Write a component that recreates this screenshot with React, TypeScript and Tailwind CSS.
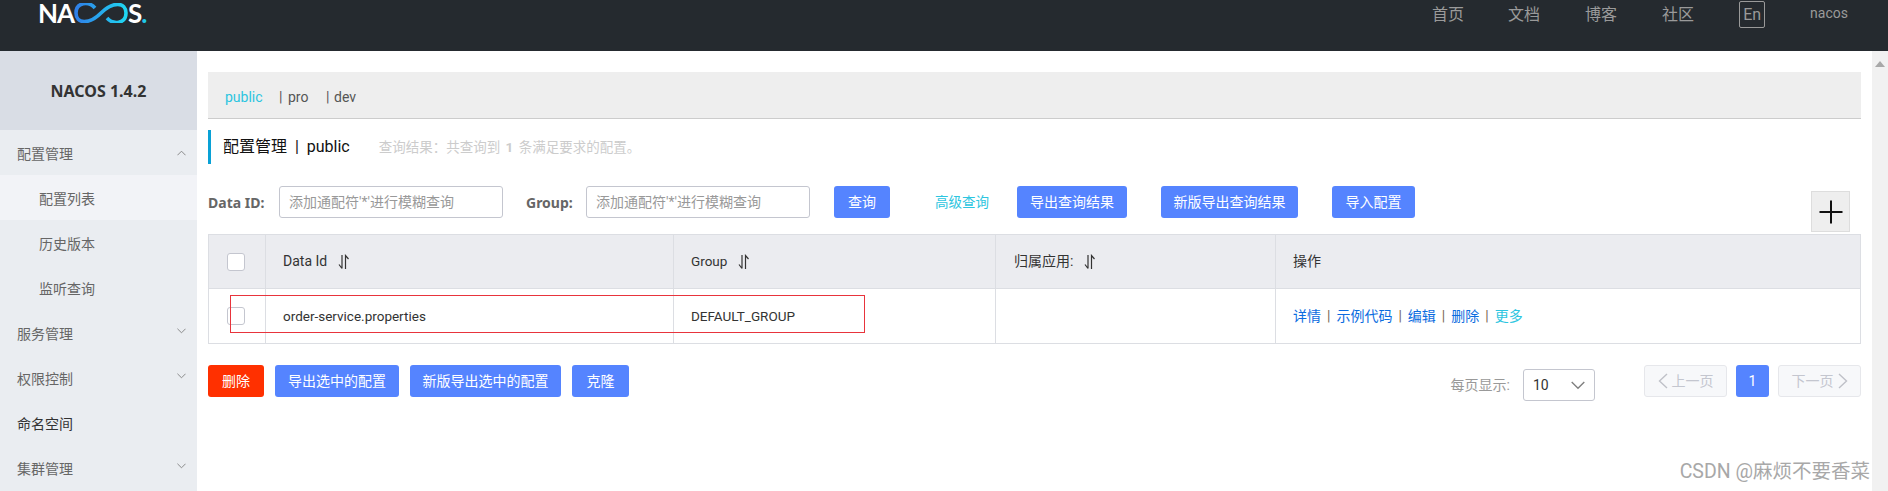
import React from "react";

const Chevron = ({ up, className }: { up?: boolean; className?: string }) => (
  <svg viewBox="0 0 10 6" className={className} fill="none" stroke="#808080" strokeWidth="1">
    <path d={up ? "M0.5 5.5 L5 1 L9.5 5.5" : "M0.5 0.5 L5 5 L9.5 0.5"} />
  </svg>
);
const Sort = () => (
  <svg viewBox="0 0 12 16" className="w-3 h-4 ml-[11px]" fill="none" stroke="#333" strokeWidth="1.2">
    <path d="M4 1 V14.5 M1 10.5 L4 14.5 M7.5 15 V1.5 L10.5 5" />
  </svg>
);
const Btn = ({ w, children, red }: { w: string; children: React.ReactNode; red?: boolean }) => (
  <button className={`${w} h-8 rounded-[3px] text-white text-[14px] flex items-center justify-center ${red ? "bg-[#ff3000]" : "bg-[#5584ff]"}`}>{children}</button>
);
const MenuRow = ({ label, chevron, up, dark }: { label: string; chevron?: boolean; up?: boolean; dark?: boolean }) => (
  <div className={`h-[45px] pl-[17px] pt-[4px] flex items-center relative text-[14px] ${dark ? "text-[#333]" : "text-[#666]"}`}>
    {label}
    {chevron && <Chevron up={up} className={`w-[9px] h-[6px] absolute left-[177px] ${up ? "top-[20px]" : "top-[18px]"}`} />}
  </div>
);
const SubRow = ({ label, active }: { label: string; active?: boolean }) => (
  <div className={`h-[45px] pl-[39px] pt-[4px] flex items-center text-[14px] text-[#666] ${active ? "bg-[#f2f3f7]" : ""}`}>{label}</div>
);
const Input = () => (
  <div className="w-[224px] h-8 border border-[#c4c6cf] rounded-[3px] pl-[9px] flex items-center text-[14px] text-[#999] bg-white">添加通配符'*'进行模糊查询</div>
);
const Sep = () => <span className="text-[#7a6a55] mx-[6px]">|</span>;

export default function App() {
  return (
    <div className="w-[1888px] h-[491px] overflow-hidden bg-white flex flex-col font-['Roboto','Noto_Sans_CJK_SC',sans-serif]">
      <header className="h-[51px] shrink-0 bg-[#252a2f] relative flex items-start">
        <div className="ml-[38px] flex items-center h-[26px] text-white text-[26px] font-bold leading-[26px] font-['Lato',sans-serif]">
          <span className="tracking-[-1px]">NA</span>
          <svg viewBox="0 0 54 20" className="w-[54px] h-[20px]" fill="none" strokeWidth="3.6">
            <defs>
              <linearGradient id="lg" x1="0" x2="1" y1="0" y2="0">
                <stop offset="0" stopColor="#2f7fe8" />
                <stop offset="1" stopColor="#1fd6f2" />
              </linearGradient>
            </defs>
            <path stroke="url(#lg)" d="M21 5 C15 -2 2 -1 2 10 C2 21 15 22 27 10 C39 -2 52 -1 52 10 C52 21 39 22 33 15" />
          </svg>
          <span>S</span>
          <span className="text-[#1fc8e8] -ml-[1px]">.</span>
        </div>
        <nav className="ml-auto flex items-start text-[#9a9a9a] text-[16px] leading-none pt-[7px]">
          <span className="w-[76px]">首页</span>
          <span className="w-[77px]">文档</span>
          <span className="w-[77px]">博客</span>
          <span className="w-[77px]">社区</span>
          <span className="w-[26px] h-[27px] -mt-[6px] border border-[#9a9a9a] rounded-[2px] flex items-center justify-center">En</span>
          <span className="ml-[45px] mr-[40px] -mt-[1px] text-[14px]">nacos</span>
        </nav>
      </header>
      <div className="flex flex-1 min-h-0">
        <aside className="w-[197px] shrink-0 bg-[#eaedf1]">
          <div className="h-[79px] bg-[#d9dde5] flex items-center justify-center text-[16px] font-bold text-[#333] font-['Noto_Sans',sans-serif]">NACOS 1.4.2</div>
          <MenuRow label="配置管理" chevron up />
          <SubRow label="配置列表" active />
          <SubRow label="历史版本" />
          <SubRow label="监听查询" />
          <MenuRow label="服务管理" chevron />
          <MenuRow label="权限控制" chevron />
          <MenuRow label="命名空间" dark />
          <MenuRow label="集群管理" chevron />
        </aside>
        <main className="flex-1 pl-[11px] pr-[11px] pt-[21px] relative">
          <div className="h-[47px] bg-[#eeeeee] border-b border-[#cccccc] pl-[17px] flex items-center text-[14px] pt-[5px]">
            <span className="text-[#2cc5e0] w-[54px]">public</span>
            <span className="text-[#555] w-[9px]">|</span>
            <span className="text-[#555] w-[38px]">pro</span>
            <span className="text-[#555] w-[8px]">|</span>
            <span className="text-[#555]">dev</span>
          </div>
          <div className="mt-[11px] h-[34px] border-l-[3px] border-[#09a1d6] pl-3 flex items-center">
            <span className="text-[16px] text-[#111]">配置管理&nbsp;&nbsp;|&nbsp;&nbsp;public</span>
            <span className="ml-[29px] text-[13.5px] text-[#ccc]">查询结果：共查询到 <b className="mx-[2px]">1</b> 条满足要求的配置。</span>
          </div>
          <div className="mt-[22px] mb-[2px] flex items-start">
            <span className="w-[71px] h-8 flex items-center text-[14px] font-bold text-[#666] font-['Noto_Sans',sans-serif]">Data ID:</span>
            <Input />
            <span className="ml-[23px] w-[60px] h-8 flex items-center text-[14px] font-bold text-[#666] font-['Noto_Sans',sans-serif]">Group:</span>
            <Input />
            <span className="ml-[24px]"><Btn w="w-[56px]">查询</Btn></span>
            <span className="ml-[45px] w-[54px] h-8 flex items-center text-[13.5px] text-[#2cc5e0] whitespace-nowrap">高级查询</span>
            <span className="ml-[28px]"><Btn w="w-[110px]">导出查询结果</Btn></span>
            <span className="ml-[34px]"><Btn w="w-[137px]">新版导出查询结果</Btn></span>
            <span className="ml-[34px]"><Btn w="w-[83px]">导入配置</Btn></span>
            <span className="ml-auto mr-[11px] mt-[5px] w-[39px] h-[41px] bg-[#eeeeee] border border-[#dddddd] flex items-center justify-center">
              <svg viewBox="0 0 24 24" className="w-6 h-6" stroke="#111" strokeWidth="2"><path d="M12 0.5V23.5M0.5 12H23.5" /></svg>
            </span>
          </div>
          <div className="relative">
            <div className="border border-[#dcdee3] grid grid-cols-[57px_408px_322px_280px_1fr] text-[14px] text-[#333]">
              <div className="h-[54px] bg-[#ebecf0] border-r border-b border-[#dcdee3] flex items-center pl-[18px]">
                <span className="w-[18px] h-[18px] bg-white border border-[#c4c6cf] rounded-[3px]" />
              </div>
              <div className="h-[54px] bg-[#ebecf0] border-r border-b border-[#dcdee3] flex items-center pl-[17px]">Data Id<Sort /></div>
              <div className="h-[54px] bg-[#ebecf0] border-r border-b border-[#dcdee3] flex items-center pl-[17px] text-[13.5px]">Group<Sort /></div>
              <div className="h-[54px] bg-[#ebecf0] border-r border-b border-[#dcdee3] flex items-center pl-[18px]">归属应用:<Sort /></div>
              <div className="h-[54px] bg-[#ebecf0] border-b border-[#dcdee3] flex items-center pl-[17px]">操作</div>
              <div className="h-[54px] border-r border-[#dcdee3] flex items-center pl-[18px]">
                <span className="w-[18px] h-[18px] bg-white border border-[#c4c6cf] rounded-[3px]" />
              </div>
              <div className="h-[54px] border-r border-[#dcdee3] flex items-center pl-[17px] text-[13.5px]">order-service.properties</div>
              <div className="h-[54px] border-r border-[#dcdee3] flex items-center pl-[17px] text-[13.5px]">DEFAULT_GROUP</div>
              <div className="h-[54px] border-r border-[#dcdee3]" />
              <div className="h-[54px] flex items-center pl-[17px] text-[#0b6ce0]">
                详情<Sep />示例代码<Sep />编辑<Sep />删除<Sep /><span className="text-[#2cc5e0]">更多</span>
              </div>
            </div>
            <div className="absolute left-[22px] top-[61px] w-[635px] h-[38px] border-[1.5px] border-[#e8343c]" />
          </div>
          <div className="mt-[21px] flex items-start">
            <Btn w="w-[56px]" red>删除</Btn>
            <span className="ml-[11px]"><Btn w="w-[124px]">导出选中的配置</Btn></span>
            <span className="ml-[11px]"><Btn w="w-[151px]">新版导出选中的配置</Btn></span>
            <span className="ml-[11px]"><Btn w="w-[57px]">克隆</Btn></span>
            <span className="ml-auto mt-[12px] text-[14px] leading-[16px] text-[#999]">每页显示:</span>
            <div className="ml-[13px] mt-[4px] w-[72px] h-8 border border-[#c4c6cf] rounded-[3px] pl-[9px] pr-[9px] flex items-center justify-between text-[14px] text-[#333]">
              10<Chevron className="w-[14px] h-[9px]" />
            </div>
            <div className="ml-[49px] w-[83px] h-8 bg-[#f7f8fa] border border-[#e6e7eb] rounded-[3px] flex items-center justify-center text-[14px] text-[#c4c6cf] gap-[4px]">
              <svg viewBox="0 0 10 16" className="w-[10px] h-[16px]" fill="none" stroke="#bfc1c8" strokeWidth="1.4"><path d="M9 1 L1.5 8 L9 15" /></svg>上一页
            </div>
            <div className="ml-[9px] w-[33px] h-8 bg-[#5584ff] rounded-[3px] flex items-center justify-center text-[14px] text-white">1</div>
            <div className="ml-[9px] w-[83px] h-8 bg-[#f7f8fa] border border-[#e6e7eb] rounded-[3px] flex items-center justify-center text-[14px] text-[#c4c6cf] gap-[4px]">
              下一页<svg viewBox="0 0 10 16" className="w-[10px] h-[16px]" fill="none" stroke="#bfc1c8" strokeWidth="1.4"><path d="M1 1 L8.5 8 L1 15" /></svg>
            </div>
          </div>
          <div className="absolute right-[2px] bottom-[7px] text-[19.5px] leading-6 text-[#a8a8a8] whitespace-nowrap">CSDN @麻烦不要香菜</div>
        </main>
        <div className="w-4 shrink-0 bg-[#f1f1f1] flex justify-center pt-[10px]">
          <svg viewBox="0 0 10 6" className="w-[10px] h-[6px]"><path d="M0 6 L5 0 L10 6Z" fill="#a8a8a8" /></svg>
        </div>
      </div>
    </div>
  );
}
